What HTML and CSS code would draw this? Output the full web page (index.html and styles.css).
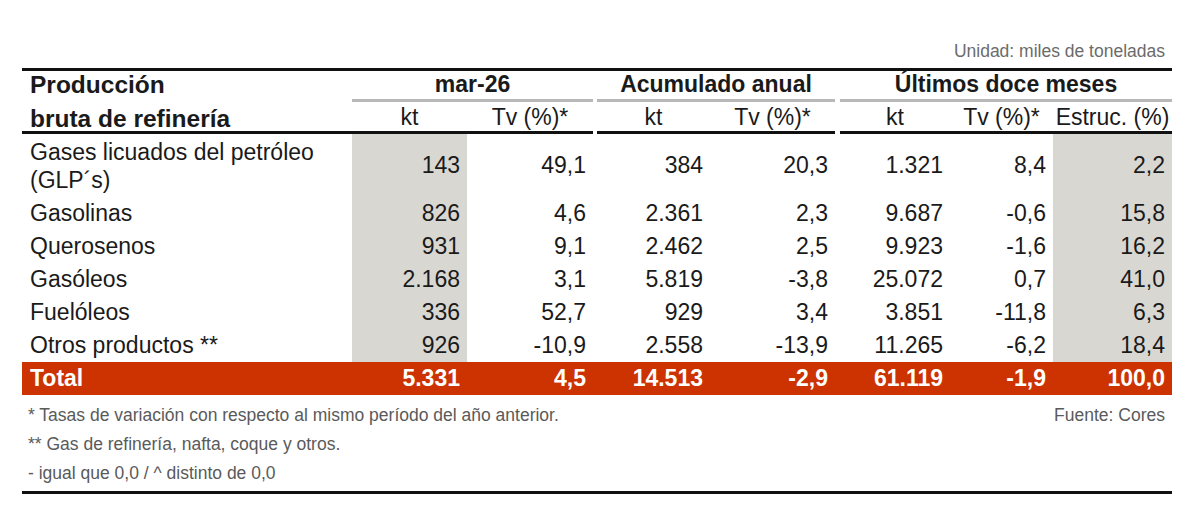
FILE: index.html
```html
<!DOCTYPE html>
<html lang="es">
<head>
<meta charset="utf-8">
<title>Producción bruta de refinería</title>
<link rel="stylesheet" href="styles.css">
</head>
<body>
<div class="page">
  <div class="unit">Unidad: miles de toneladas</div>
  <div class="grid">
    <div class="c lbl top">Producción</div>
    <div class="c grp span2">mar-26</div>
    <div class="c"></div>
    <div class="c grp span2">Acumulado anual</div>
    <div class="c"></div>
    <div class="c grp span3">Últimos doce meses</div>

    <div class="c lbl rule bottom">bruta de refinería</div>
    <div class="c sub rule">kt</div>
    <div class="c sub rule">Tv (%)*</div>
    <div class="c"></div>
    <div class="c sub rule">kt</div>
    <div class="c sub rule">Tv (%)*</div>
    <div class="c"></div>
    <div class="c sub rule">kt</div>
    <div class="c sub rule">Tv (%)*</div>
    <div class="c sub rule">Estruc. (%)</div>

    <div class="c name tall">Gases licuados del petróleo<br>(GLP´s)</div>
    <div class="c v g">143</div><div class="c v">49,1</div><div class="c"></div>
    <div class="c v">384</div><div class="c v">20,3</div><div class="c"></div>
    <div class="c v">1.321</div><div class="c v">8,4</div><div class="c v g">2,2</div>

    <div class="c name">Gasolinas</div>
    <div class="c v g">826</div><div class="c v">4,6</div><div class="c"></div>
    <div class="c v">2.361</div><div class="c v">2,3</div><div class="c"></div>
    <div class="c v">9.687</div><div class="c v">-0,6</div><div class="c v g">15,8</div>

    <div class="c name">Querosenos</div>
    <div class="c v g">931</div><div class="c v">9,1</div><div class="c"></div>
    <div class="c v">2.462</div><div class="c v">2,5</div><div class="c"></div>
    <div class="c v">9.923</div><div class="c v">-1,6</div><div class="c v g">16,2</div>

    <div class="c name">Gasóleos</div>
    <div class="c v g">2.168</div><div class="c v">3,1</div><div class="c"></div>
    <div class="c v">5.819</div><div class="c v">-3,8</div><div class="c"></div>
    <div class="c v">25.072</div><div class="c v">0,7</div><div class="c v g">41,0</div>

    <div class="c name">Fuelóleos</div>
    <div class="c v g">336</div><div class="c v">52,7</div><div class="c"></div>
    <div class="c v">929</div><div class="c v">3,4</div><div class="c"></div>
    <div class="c v">3.851</div><div class="c v">-11,8</div><div class="c v g">6,3</div>

    <div class="c name">Otros productos **</div>
    <div class="c v g">926</div><div class="c v">-10,9</div><div class="c"></div>
    <div class="c v">2.558</div><div class="c v">-13,9</div><div class="c"></div>
    <div class="c v">11.265</div><div class="c v">-6,2</div><div class="c v g">18,4</div>

    <div class="c name t">Total</div>
    <div class="c v t">5.331</div><div class="c v t">4,5</div><div class="c t"></div>
    <div class="c v t">14.513</div><div class="c v t">-2,9</div><div class="c t"></div>
    <div class="c v t">61.119</div><div class="c v t">-1,9</div><div class="c v t">100,0</div>
  </div>
  <div class="notes">
    <div class="note-row"><span>* Tasas de variación con respecto al mismo período del año anterior.</span><span>Fuente: Cores</span></div>
    <div class="note-row"><span>** Gas de refinería, nafta, coque y otros.</span></div>
    <div class="note-row"><span>- igual que 0,0 / ^ distinto de 0,0</span></div>
  </div>
</div>
</body>
</html>
```
FILE: styles.css
```css
* { box-sizing: border-box; }
body {
  margin: 0;
  background: #ffffff;
  font-family: "Liberation Sans", Arial, sans-serif;
  color: #1a1a1a;
}
.page {
  width: 1150px;
  margin-left: 22px;
  padding-top: 41px;
}
.unit {
  text-align: right;
  font-size: 17.5px;
  line-height: 21px;
  color: #6b6b6b;
  padding-right: 7px;
  margin-bottom: 6px;
}
.grid {
  display: grid;
  grid-template-columns: 330px 115px 126px 4px 113px 125px 5px 110px 103px 119px;
  grid-template-rows: 31px 32px 63px repeat(6, 33px);
  border-top: 3px solid #111;
  font-size: 23px;
}
.c {
  display: flex;
  align-items: center;
  white-space: nowrap;
}
.lbl {
  font-weight: bold;
  font-size: 24.5px;
  padding-left: 8px;
}
.top { padding-bottom: 4px; }
.bottom { padding-top: 4px; }
.grp {
  font-weight: bold;
  justify-content: center;
  padding-bottom: 2px;
  border-bottom: 3px solid #b8b8b8;
}
.span2 { grid-column: span 2; }
.span3 { grid-column: span 3; }
.rule { border-bottom: 3px solid #111; }
.sub { justify-content: center; padding-top: 1px; }
.name { padding-left: 8px; }
.tall {
  line-height: 28px;
  white-space: normal;
}
.v {
  justify-content: flex-end;
  padding-right: 7px;
}
.g { background: #d9d7d2; }
.t {
  background: #cc3300;
  color: #ffffff;
  font-weight: bold;
}
.notes {
  padding-top: 6px;
  border-bottom: 3px solid #111;
  padding-bottom: 3px;
  font-size: 17.5px;
  color: #5a5a5a;
}
.note-row {
  display: flex;
  justify-content: space-between;
  line-height: 29px;
  padding-left: 6px;
  padding-right: 7px;
}
```
